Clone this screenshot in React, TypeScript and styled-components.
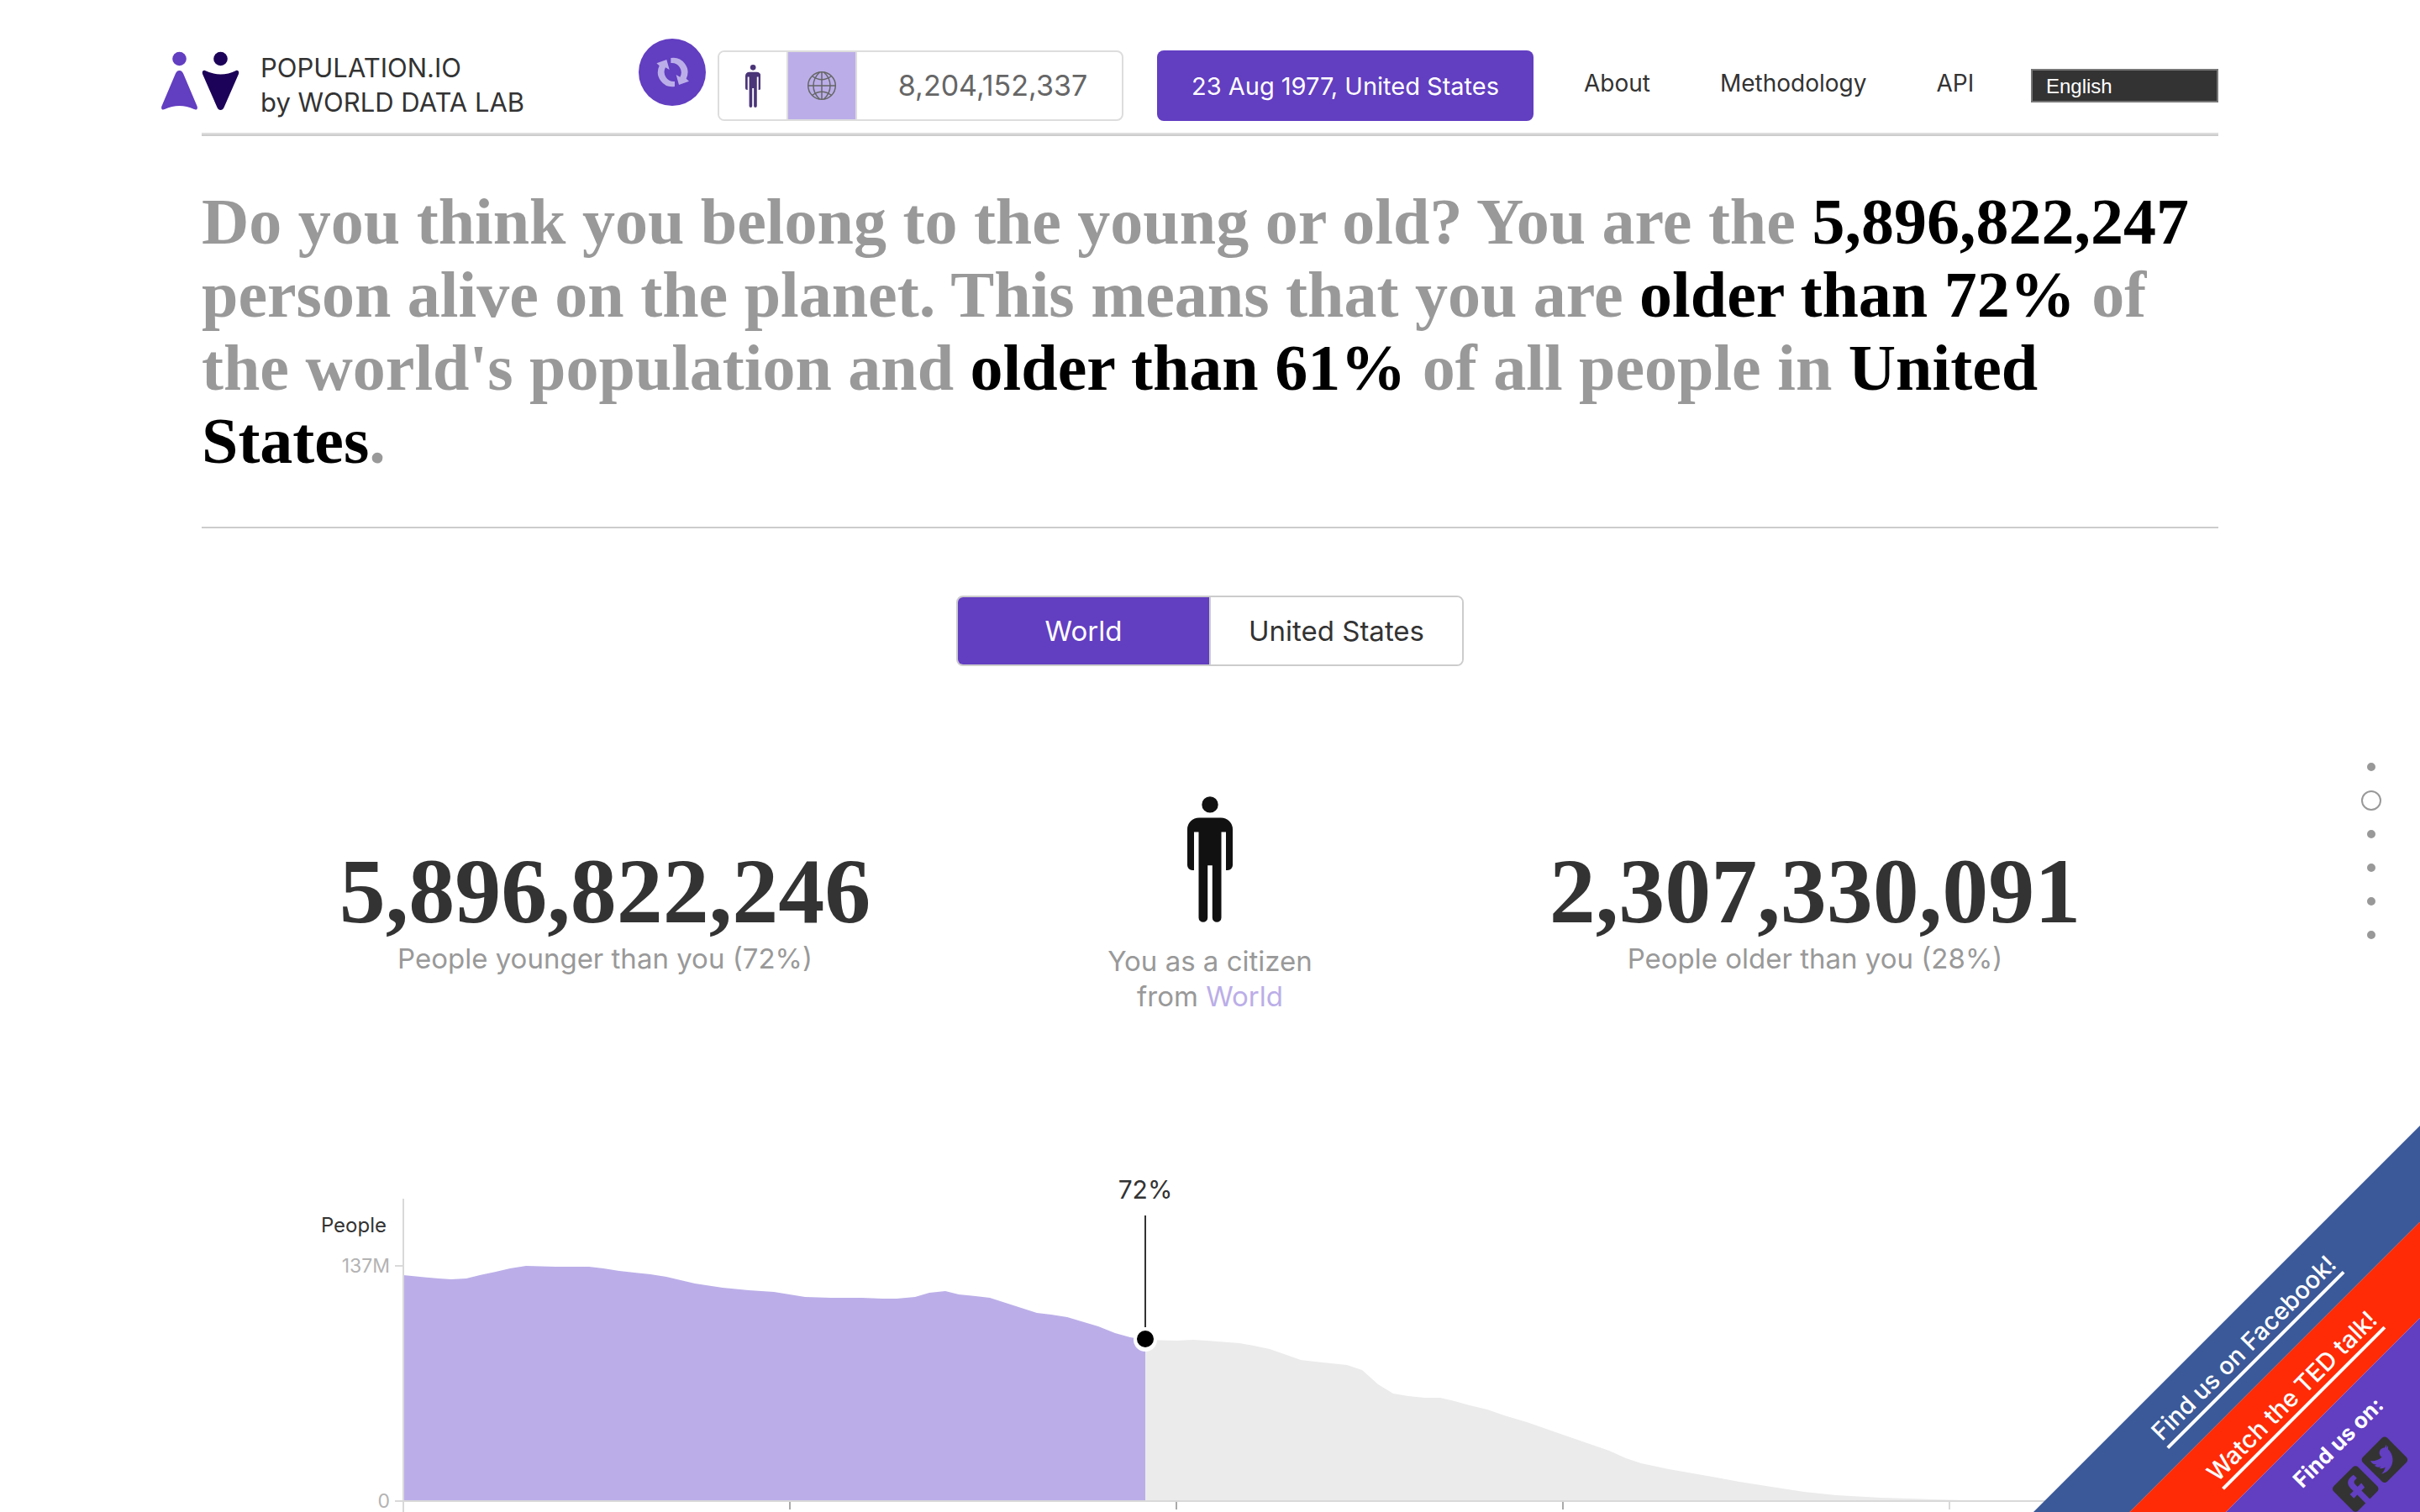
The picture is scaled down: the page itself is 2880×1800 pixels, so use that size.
import React, { useState } from "react";
import styled, { createGlobalStyle, css } from "styled-components";
import { FaFacebookSquare, FaTwitterSquare } from "react-icons/fa";

const color = {
  purple: "#623ec1",
  lilac: "#bbaee8",
  ink: "#333",
  muted: "#999",
  line: "#ccc",
  hairline: "#ddd",
};

const sans = `Inter, "Open Sans", sans-serif`;
const serif = `"Liberation Serif", "Times New Roman", serif`;

const GlobalStyle = createGlobalStyle`
  *, *::before, *::after { box-sizing: border-box; }
  body {
    margin: 0;
    background: #fff;
    color: ${color.ink};
    font-family: ${sans};
    overflow-x: hidden;
  }
  button, select { font-family: inherit; margin: 0; }
`;

const Page = styled.div`
  padding: 0 240px;
`;

/* ---------- header ---------- */

const Header = styled.header`
  display: flex;
  align-items: center;
  padding: 60px 0 14px;
  border-bottom: 2px solid ${color.hairline};
`;

const Brand = styled.a`
  display: flex;
  flex: none;
  align-items: flex-start;
  gap: 22px;
  width: 568px;
  height: 84px;
  margin-left: -48px;
  color: ${color.ink};
  text-decoration: none;
`;

const BrandText = styled.span`
  font-size: 31px;
  line-height: 41px;
  white-space: nowrap;
`;

const RefreshButton = styled.button`
  display: flex;
  flex: none;
  align-items: center;
  justify-content: center;
  align-self: flex-start;
  width: 80px;
  height: 80px;
  margin: -14px 14px 0 0;
  padding: 0;
  border: 0;
  border-radius: 50%;
  background: ${color.purple};
`;

const Counter = styled.div`
  display: flex;
  flex: none;
  width: 483px;
  height: 84px;
  border: 2px solid ${color.hairline};
  border-radius: 8px;
  overflow: hidden;
`;

const CounterMode = styled.button<{ $active?: boolean }>`
  display: flex;
  flex: none;
  align-items: center;
  justify-content: center;
  width: 82px;
  padding: 0;
  border: 0;
  border-right: 2px solid ${color.hairline};
  background: ${(p) => (p.$active ? color.lilac : "#fff")};
`;

const CounterValue = styled.output`
  flex: 1;
  padding-left: 8px;
  color: #666;
  font-size: 34px;
  line-height: 80px;
  text-align: center;
`;

const ProfileButton = styled.button`
  flex: none;
  width: 448px;
  height: 84px;
  margin-left: 40px;
  padding: 0;
  border: 0;
  border-radius: 8px;
  background: ${color.purple};
  color: #fff;
  font-size: 29px;
  white-space: nowrap;
`;

const MainNav = styled.nav`
  display: flex;
  flex: 1;
  align-items: center;
  padding-left: 60px;
`;

const NavLink = styled.a`
  padding-bottom: 6px;
  color: ${color.ink};
  font-size: 28px;
  line-height: 34px;
  text-decoration: none;

  & + & { margin-left: 83px; }
`;

const LanguageSelect = styled.select`
  appearance: none;
  width: 223px;
  height: 40px;
  padding: 0 16px;
  border: 2px solid #767676;
  border-radius: 0;
  background: ${color.ink};
  color: #fff;
  font-family: "Liberation Sans", Arial, sans-serif;
  font-size: 24px;

  && { margin-left: auto; }
`;

/* ---------- intro ---------- */

const Intro = styled.section`
  padding: 58px 0 59px;
  border-top: 2px solid ${color.line};
  border-bottom: 2px solid ${color.line};
`;

const Headline = styled.h1`
  margin: 0;
  color: ${color.muted};
  font: 700 78px/87px ${serif};

  strong { color: #000; }
`;

/* ---------- region toggle ---------- */

const Toggle = styled.div`
  display: flex;
  width: 604px;
  height: 84px;
  margin: 80px auto 0;
  border: 2px solid ${color.line};
  border-radius: 8px;
  overflow: hidden;
`;

const ToggleOption = styled.button<{ $active: boolean }>`
  flex: 1;
  padding: 0;
  border: 0;
  background: #fff;
  color: ${color.ink};
  font-size: 33px;

  & + & { border-left: 2px solid ${color.line}; }

  ${(p) => p.$active && css`
    background: ${color.purple};
    color: #fff;
  `}
`;

/* ---------- stats ---------- */

const Stats = styled.section`
  display: grid;
  grid-template-columns: 2fr 1fr 2fr;
  margin-top: 155px;
  text-align: center;
`;

const Stat = styled.div`
  padding-top: 58px;
`;

const StatNumber = styled.div`
  font: 700 110px/110px ${serif};
`;

const Caption = styled.p`
  margin: 0;
  padding-top: 4px;
  color: ${color.muted};
  font-size: 33px;
  line-height: 42px;
`;

const Citizen = styled.div`
  display: flex;
  flex-direction: column;
  align-items: center;
  gap: 21px;
`;

const Accent = styled.span`
  color: ${color.lilac};
`;

/* ---------- chart ---------- */

const ChartBox = styled.figure`
  height: 420px;
  margin: 173px 0 0;
  overflow: hidden;

  svg { display: block; width: 100%; }
`;

const ChartText = styled.text<{ $size: number; $fill: string }>`
  font-family: ${sans};
  font-size: ${(p) => p.$size}px;
  fill: ${(p) => p.$fill};
`;

/* ---------- section dots ---------- */

const SectionNav = styled.nav`
  position: fixed;
  top: 893px;
  right: 46px;
  display: flex;
  flex-direction: column;
`;

const SectionLink = styled.a<{ $current: boolean }>`
  display: flex;
  align-items: center;
  justify-content: center;
  width: 24px;
  height: 40px;

  &::before {
    content: "";
    width: ${(p) => (p.$current ? 24 : 10)}px;
    height: ${(p) => (p.$current ? 24 : 10)}px;
    border: 2px solid ${color.muted};
    border-radius: 50%;
    background: ${(p) => (p.$current ? "#fff" : color.muted)};
  }
`;

/* ---------- corner ribbons ---------- */

const Corner = styled.aside`
  position: fixed;
  right: 0;
  bottom: 0;
  width: 460px;
  height: 460px;
  overflow: hidden;
  pointer-events: none;
`;

const RibbonStack = styled.div`
  position: absolute;
  top: 100%;
  left: 0;
  width: 652px;
  transform: rotate(-45deg);
  transform-origin: 0 0;
  pointer-events: auto;
`;

const Ribbon = styled.div<{ $bg: string }>`
  display: flex;
  align-items: center;
  justify-content: center;
  height: 81px;
  padding-right: 22px;
  background: ${(p) => p.$bg};
`;

const RibbonLink = styled.a`
  border-bottom: 4px solid #fff;
  color: #fff;
  font-size: 29px;
  font-weight: 500;
  line-height: 36px;
  text-decoration: none;
`;

const SocialRibbon = styled.div`
  display: flex;
  flex-direction: column;
  align-items: center;
  gap: 12px;
  height: 180px;
  padding: 18px 22px 0 0;
  background: ${color.purple};
  color: #fff;
  font-size: 26px;
  font-weight: 700;
  line-height: 36px;
`;

const SocialLinks = styled.div`
  display: flex;
  gap: 2px;
  font-size: 47px;

  a { display: flex; color: ${color.ink}; }
`;

/* ---------- drawings ---------- */

const Logo = () => (
  <svg width="96" height="72" viewBox="0 0 96 72" aria-hidden="true">
    <g fill={color.purple}>
      <circle cx="21.5" cy="10" r="8.3" />
      <path d="M21.5 24C24 24 25.5 26 26.5 28.5L42.6 66.5C43.6 69.5 42 71.4 39 70Q21.5 62 4 70C1 71.4-.6 69.5.4 66.5L16.5 28.5C17.5 26 19 24 21.5 24Z" />
    </g>
    <g fill="#1c0258">
      <circle cx="70.5" cy="10" r="8.3" />
      <path d="M52 24Q70.5 33 89 24C91.5 23.3 93 25.5 91.8 28.5L74.5 68C73 72 68 72 66.5 68L49.2 28.5C48 25.5 49.5 23.3 52 24Z" />
    </g>
  </svg>
);

const CYCLE_ARROW = "M-7-51A52 52 0 0 1 48 23L58 32L22 45L12 9L26 17A34 34 0 0 0-7-33Z";

const CycleIcon = () => (
  <svg width="40" height="36" viewBox="-62 -54 120 108" fill={color.lilac} aria-hidden="true">
    <path d={CYCLE_ARROW} />
    <path d={CYCLE_ARROW} transform="rotate(180)" />
  </svg>
);

const Person = ({ height, fill }: { height: number; fill: string }) => (
  <svg height={height} viewBox="0 0 54 150" fill={fill} aria-hidden="true">
    <circle cx="27" cy="9.9" r="9.7" />
    <path d="M14 25.5H40A14 14 0 0 1 54 39.5V82A6 6 0 0 1 48 88H46V42.5H40.5V144.5A5.35 5.35 0 0 1 29.8 144.5V82.3H24.2V144.5A5.35 5.35 0 0 1 13.5 144.5V42.5H8V88H6A6 6 0 0 1 0 82V39.5A14 14 0 0 1 14 25.5Z" />
  </svg>
);

const Globe = () => (
  <svg width="36" height="36" viewBox="0 0 36 36" fill="none" stroke="#666" strokeWidth="1.5" aria-hidden="true">
    <circle cx="18" cy="18" r="16.3" />
    <path d="M18 1.5V34.5M1.5 18H34.5" />
    <path d="M15.5 2C5.5 11 5.5 25 15.5 34M20.5 2C30.5 11 30.5 25 20.5 34" />
    <path d="M6.5 6.5Q18 15 29.5 6.5M6.5 29.5Q18 21 29.5 29.5" />
  </svg>
);

/* Age distribution outline, drawn in the chart's own units. */
const BASE = 387;
const YOUNGER: [number, number][] = [
  [240, 118], [260, 120], [282, 122], [297, 123], [315, 122], [331, 118], [350, 114], [367, 110],
  [386, 107], [421, 108], [461, 108], [478, 110], [497, 113], [534, 117], [553, 120], [587, 128],
  [620, 133], [651, 136], [681, 138], [718, 144], [749, 145], [786, 145], [810, 146], [827, 146],
  [849, 144], [866, 139], [885, 137], [901, 141], [921, 143], [938, 145], [994, 163], [1011, 165],
  [1030, 168], [1067, 179], [1087, 187], [1105, 192], [1123, 195],
];
const OLDER: [number, number][] = [
  [1123, 195], [1160, 196], [1180, 195], [1196, 196], [1235, 199], [1252, 202], [1271, 206], [1308, 219],
  [1325, 221], [1344, 223], [1363, 225], [1381, 231], [1400, 248], [1418, 259], [1436, 262], [1455, 264],
  [1474, 264], [1491, 268], [1509, 273], [1530, 278], [1550, 285], [1577, 293], [1620, 308], [1675, 327],
  [1695, 336], [1713, 342], [1746, 349], [1786, 356], [1830, 364], [1868, 370], [1907, 376], [1945, 380],
  [1998, 383], [2060, 385], [2098, 386],
];
const area = (pts: [number, number][]) =>
  `M${pts[0][0]} ${BASE}L${pts.map((p) => p.join(" ")).join("L")}L${pts[pts.length - 1][0]} ${BASE}Z`;

const PopulationChart = () => (
  <svg viewBox="0 -20 2400 420" role="img" aria-label="World population by age">
    <path d={area(OLDER)} fill="#ebebeb" />
    <path d={area(YOUNGER)} fill={color.lilac} />
    <path d="M240 27V400M230 107H240M230 387H2400M2080 388V397" stroke="#d9d9d9" strokeWidth="2" fill="none" />
    <path d="M700 388V397M1160 388V397M1620 388V397" stroke="#aaa" strokeWidth="2" />
    <path d="M1123 47V180" stroke={color.ink} strokeWidth="2" />
    <circle cx="1123" cy="195" r="14" fill="#fff" />
    <circle cx="1123" cy="194" r="10" fill="#000" />
    <ChartText $size={30} $fill={color.ink} x="1123" y="27" textAnchor="middle">72%</ChartText>
    <ChartText $size={24} $fill={color.ink} x="220" y="67" textAnchor="end">People</ChartText>
    <ChartText $size={23} $fill="#b3b3b3" x="224" y="115" textAnchor="end">137M</ChartText>
    <ChartText $size={23} $fill="#b3b3b3" x="224" y="395" textAnchor="end">0</ChartText>
  </svg>
);

const SECTIONS = ["start", "you", "birthday", "expectancy", "countries", "death"];
const REGIONS = ["World", "United States"];

export default function App() {
  const [region, setRegion] = useState(REGIONS[0]);

  return (
    <>
      <GlobalStyle />
      <Page>
        <Header>
          <Brand href="#home">
            <Logo />
            <BrandText>POPULATION.IO<br />by WORLD DATA LAB</BrandText>
          </Brand>
          <RefreshButton aria-label="Refresh"><CycleIcon /></RefreshButton>
          <Counter>
            <CounterMode aria-label="My country"><Person height={51} fill="#4a3578" /></CounterMode>
            <CounterMode aria-label="World population" $active><Globe /></CounterMode>
            <CounterValue>8,204,152,337</CounterValue>
          </Counter>
          <ProfileButton>23 Aug 1977, United States</ProfileButton>
          <MainNav>
            <NavLink href="#about">About</NavLink>
            <NavLink href="#methodology">Methodology</NavLink>
            <NavLink href="#api">API</NavLink>
            <LanguageSelect aria-label="Language" defaultValue="en">
              <option value="en">English</option>
            </LanguageSelect>
          </MainNav>
        </Header>

        <main>
          <Intro>
            <Headline>
              Do you think you belong to the young or old? You are the <strong>5,896,822,247</strong> person
              alive on the planet. This means that you are <strong>older than 72%</strong> of the world's
              population and <strong>older than 61%</strong> of all people in <strong>United States</strong>.
            </Headline>
          </Intro>

          <Toggle>
            {REGIONS.map((name) => (
              <ToggleOption key={name} $active={name === region} onClick={() => setRegion(name)}>
                {name}
              </ToggleOption>
            ))}
          </Toggle>

          <Stats>
            <Stat>
              <StatNumber>5,896,822,246</StatNumber>
              <Caption>People younger than you (72%)</Caption>
            </Stat>
            <Citizen>
              <Person height={150} fill="#111" />
              <Caption>You as a citizen<br />from <Accent>{region}</Accent></Caption>
            </Citizen>
            <Stat>
              <StatNumber>2,307,330,091</StatNumber>
              <Caption>People older than you (28%)</Caption>
            </Stat>
          </Stats>

          <ChartBox><PopulationChart /></ChartBox>
        </main>
      </Page>

      <SectionNav aria-label="Sections">
        {SECTIONS.map((id) => (
          <SectionLink key={id} href={`#${id}`} aria-label={id} $current={id === "you"} />
        ))}
      </SectionNav>

      <Corner>
        <RibbonStack>
          <Ribbon $bg="#3b5998"><RibbonLink href="#facebook">Find us on Facebook!</RibbonLink></Ribbon>
          <Ribbon $bg="#ff2b06"><RibbonLink href="#ted">Watch the TED talk!</RibbonLink></Ribbon>
          <SocialRibbon>
            Find us on:
            <SocialLinks>
              <a href="#facebook" aria-label="Facebook"><FaFacebookSquare /></a>
              <a href="#twitter" aria-label="Twitter"><FaTwitterSquare /></a>
            </SocialLinks>
          </SocialRibbon>
        </RibbonStack>
      </Corner>
    </>
  );
}
